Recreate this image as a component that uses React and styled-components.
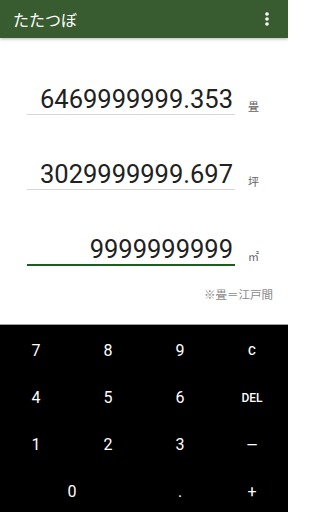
import React from 'react'
import styled, { createGlobalStyle } from 'styled-components'

const GlobalStyle = createGlobalStyle`
  html, body {
    margin: 0;
    padding: 0;
    background: #fff;
  }
  #root {
    width: 288px;
    height: 512px;
  }
`

const fields = [
  { value: '6469999999.353', unit: '畳' },
  { value: '3029999999.697', unit: '坪' },
  { value: '9999999999', unit: '㎡', active: true },
]

const keys = [
  { label: '7' }, { label: '8' }, { label: '9' }, { label: 'C', small: true },
  { label: '4' }, { label: '5' }, { label: '6' }, { label: 'DEL', small: true },
  { label: '1' }, { label: '2' }, { label: '3' }, { label: '−', wide: true },
  { label: '0', span: 2 }, { label: '.' }, { label: '+' },
]

const MenuIcon = () => (
  <svg width="4" height="14" viewBox="0 0 4 14">
    <circle cx="2" cy="2" r="1.8" fill="#fff" />
    <circle cx="2" cy="7" r="1.8" fill="#fff" />
    <circle cx="2" cy="12" r="1.8" fill="#fff" />
  </svg>
)

export default function App() {
  return (
    <Screen>
      <GlobalStyle />
      <TopBar>
        <Title>たたつぼ</Title>
        <MenuButton><MenuIcon /></MenuButton>
      </TopBar>
      <Body>
        {fields.map((f) => (
          <FieldRow key={f.unit}>
            <Input active={f.active}>{f.value}</Input>
            <Unit>{f.unit}</Unit>
          </FieldRow>
        ))}
        <Note>※畳＝江戸間</Note>
      </Body>
      <Keypad>
        {keys.map((k) => (
          <Key key={k.label} span={k.span} small={k.small} wide={k.wide}>
            {k.label}
          </Key>
        ))}
      </Keypad>
    </Screen>
  )
}

const Screen = styled.div`
  width: 288px;
  height: 512px;
  display: flex;
  flex-direction: column;
  overflow: hidden;
  font-family: Roboto, "Noto Sans CJK JP", sans-serif;
`

const TopBar = styled.header`
  height: 38px;
  flex: none;
  display: flex;
  align-items: center;
  justify-content: space-between;
  padding: 0 19px 0 13px;
  background: #385c2f;
  box-shadow: 0 1px 3px rgba(0, 0, 0, 0.3);
  position: relative;
  z-index: 1;
`

const Title = styled.h1`
  margin: 0;
  font-family: "Noto Sans CJK JP", sans-serif;
  font-size: 16px;
  font-weight: 400;
  color: #fff;
`

const MenuButton = styled.div`
  display: flex;
  align-items: center;
  margin-top: -1px;
`

const Body = styled.main`
  flex: 1;
  display: flex;
  flex-direction: column;
  gap: 44px;
  padding: 46px 15px 0 27px;
  background: #fff;
`

const FieldRow = styled.div`
  display: flex;
  align-items: flex-end;
  gap: 13px;
`

const Input = styled.div`
  width: 208px;
  text-align: right;
  font-size: 25.5px;
  line-height: 30px;
  color: #212121;
  padding-right: 2px;
  box-sizing: border-box;
  border-bottom: ${(p) => (p.active ? '2px solid #1b5e20' : '1px solid #d6d6d6')};
  margin-bottom: ${(p) => (p.active ? '-1px' : '0')};
`

const Unit = styled.span`
  font-family: "Noto Sans CJK JP", sans-serif;
  font-size: 11px;
  line-height: 14px;
  color: #616161;
  margin-bottom: 2px;
`

const Note = styled.p`
  margin: -23px 0 0;
  text-align: right;
  font-family: "Noto Sans CJK JP", sans-serif;
  font-size: 11.5px;
  color: #8a8a8a;
`

const Keypad = styled.section`
  height: 188px;
  flex: none;
  display: grid;
  grid-template-columns: repeat(4, 1fr);
  grid-auto-rows: 47px;
  background: #000;
  border-top: 1px solid #a0a0a0;
  padding-top: 2px;
  box-sizing: border-box;
`

const Key = styled.div`
  grid-column: span ${(p) => p.span || 1};
  display: flex;
  align-items: center;
  justify-content: center;
  color: #fff;
  font-family: ${(p) => (p.wide ? '"Liberation Sans"' : 'Roboto')}, sans-serif;
  font-size: ${(p) => (p.small ? '12px' : p.wide ? '19px' : '16px')};
  font-weight: ${(p) => (p.small ? 500 : 400)};
`
